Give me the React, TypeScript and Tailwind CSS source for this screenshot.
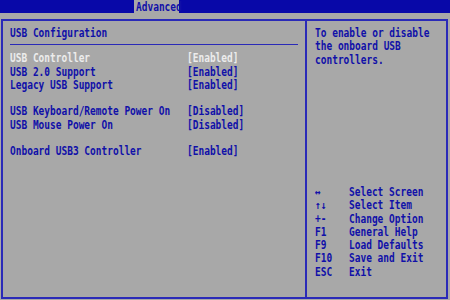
import React from "react";

const rows: ({ name: string; value: string; selected?: boolean } | null)[] = [
  { name: "USB Controller", value: "[Enabled]", selected: true },
  { name: "USB 2.0 Support", value: "[Enabled]" },
  { name: "Legacy USB Support", value: "[Enabled]" },
  null,
  { name: "USB Keyboard/Remote Power On", value: "[Disabled]" },
  { name: "USB Mouse Power On", value: "[Disabled]" },
  null,
  { name: "Onboard USB3 Controller", value: "[Enabled]" },
];

const legend: [string, string][] = [
  ["↔", "Select Screen"],
  ["↑↓", "Select Item"],
  ["+-", "Change Option"],
  ["F1", "General Help"],
  ["F9", "Load Defaults"],
  ["F10", "Save and Exit"],
  ["ESC", "Exit"],
];

export default function App() {
  return (
    <div
      className="w-[450px] h-[300px] bg-[#a8a8a8] flex flex-col overflow-hidden text-[#1010a8] font-bold text-[9.5px] leading-[13.3px] whitespace-pre"
      style={{ fontFamily: '"DejaVu Sans Mono", "Liberation Mono", monospace' }}
    >
      <div className="h-[13px] bg-[#0808a8] flex pl-[134px] shrink-0">
        <div className="bg-[#a8a8a8] w-[45px] h-[13px] pl-[2px] leading-[13px] text-[#1010a8] scale-y-[1.2]">Advanced</div>
      </div>
      <div className="flex-1 mt-[6px] ml-[1px] mr-[2px] mb-[1px] border-2 border-[#2a2ab8] flex min-h-0">
        <div className="w-[304px] border-r-2 border-[#2a2ab8] px-[7px] pt-[5px] flex flex-col">
          <div className="h-[13.3px] scale-y-[1.2]">USB Configuration</div>
          <div className="h-[1px] bg-[#2a2ab8] mt-[5px] mb-[6px]" />
          {rows.map((r, i) =>
            r ? (
              <div key={i} className={`flex h-[13.3px] scale-y-[1.2] ${r.selected ? "text-[#ececec]" : ""}`}>
                <span className="w-[177px]">{r.name}</span>
                <span>{r.value}</span>
              </div>
            ) : (
              <div key={i} className="h-[13.3px]" />
            )
          )}
        </div>
        <div className="flex-1 pl-[8px] pt-[5px] pb-[19px] flex flex-col justify-between">
          <div>
            <div className="h-[13.3px] scale-y-[1.2]">To enable or disable</div>
            <div className="h-[13.3px] scale-y-[1.2]">the onboard USB</div>
            <div className="h-[13.3px] scale-y-[1.2]">controllers.</div>
          </div>
          <div>
            {legend.map(([k, d]) => (
              <div key={k} className="flex h-[13.3px] scale-y-[1.2]">
                <span className="w-[34px]">{k}</span>
                <span>{d}</span>
              </div>
            ))}
          </div>
        </div>
      </div>
    </div>
  );
}
